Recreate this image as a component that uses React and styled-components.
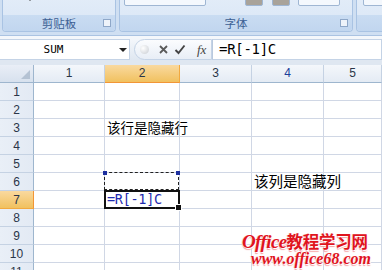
import React from "react";
import styled, { createGlobalStyle } from "styled-components";

const Global = createGlobalStyle`
  body {
    margin: 0;
    background: #ffffff;
    font-family: "Noto Sans CJK SC", "Noto Sans", sans-serif;
  }
`;

const COLS = [71, 75, 72, 72, 58];
const ROWS = 11;

const Page = styled.div`
  width: 382px;
  height: 270px;
  overflow: hidden;
  position: relative;
  background: #fff;
`;

const Ribbon = styled.div`
  height: 36px;
  display: flex;
  gap: 3px;
  padding: 0 0 0 2px;
  background: #cfdff2;
  border-bottom: 1px solid #aac3e2;
  box-sizing: border-box;
`;

const Group = styled.div`
  width: ${p => p.w}px;
  flex: none;
  height: 34px;
  margin-top: -2px;
  border: 1px solid #a9c3e3;
  border-top: none;
  border-radius: 0 0 4px 4px;
  background: linear-gradient(#e2ecf8, #d9e6f6);
  display: flex;
  flex-direction: column;
  box-sizing: border-box;
  overflow: hidden;
`;

const GroupBody = styled.div`
  flex: 1;
  position: relative;
`;

const GroupLabel = styled.div`
  height: 16px;
  background: linear-gradient(#c9dcf2, #c1d6ef);
  color: #3c5f94;
  font-size: 11.5px;
  line-height: 16px;
  text-align: center;
  position: relative;
`;

const Launcher = styled.span`
  position: absolute;
  right: ${p => p.r}px;
  top: 4px;
  width: 6px;
  height: 6px;
  border: 1px solid #8ea7c8;
  background: #eef3fa;
`;

const Stub = styled.div`
  position: absolute;
  left: ${p => p.x}px;
  top: -3px;
  width: ${p => p.w}px;
  height: 9px;
  border: 1px solid #9fb6d3;
  border-radius: 2px;
  background: ${p => p.fill || "#f4f8fd"};
`;

const Arrow = styled.span`
  position: absolute;
  left: 24px;
  top: 0px;
  width: 0;
  height: 0;
  border-left: 3px solid transparent;
  border-right: 3px solid transparent;
  border-top: 3px solid #4a4a4a;
`;

const FormulaRow = styled.div`
  height: 29px;
  padding-top: 3px;
  background: linear-gradient(#f4f7fb 0, #f4f7fb 3px, #dfe7f1 24px);
  display: flex;
  align-items: flex-start;
  box-sizing: border-box;
`;

const NameBox = styled.div`
  width: 130px;
  height: 21px;
  background: #fff;
  border: 1px solid #c4d3e6;
  border-left: none;
  box-sizing: border-box;
  display: flex;
  align-items: center;
  font-family: "DejaVu Sans Mono", monospace;
  font-size: 11px;
  color: #000;
  position: relative;
`;

const NameText = styled.span`
  flex: 1;
  text-align: center;
  padding-right: 12px;
`;

const DropArrow = styled.span`
  width: 0;
  height: 0;
  margin-right: 2px;
  border-left: 4px solid transparent;
  border-right: 4px solid transparent;
  border-top: 4px solid #222;
`;

const Buttons = styled.div`
  width: 78px;
  height: 21px;
  margin-left: 4px;
  border: 1px solid #c4d3e6;
  border-radius: 11px 0 0 11px;
  background: linear-gradient(#fbfcfe, #e8eef6);
  box-sizing: border-box;
  display: flex;
  align-items: center;
  gap: 5px;
  padding-left: 5px;
`;

const Circle = styled.span`
  width: 9px;
  height: 9px;
  border-radius: 50%;
  background: radial-gradient(circle at 35% 35%, #ffffff, #c8ccd2);
  margin-right: 4px;
`;

const Fx = styled.span`
  font-family: "Liberation Serif", serif;
  font-style: italic;
  font-size: 13px;
  color: #444;
  margin-left: 6px;
`;

const FormulaInput = styled.div`
  flex: 1;
  height: 21px;
  background: #fff;
  border: 1px solid #c4d3e6;
  border-left: 1px solid #b9c9de;
  box-sizing: border-box;
  font-family: "DejaVu Sans Mono", monospace;
  font-size: 14px;
  line-height: 19px;
  padding-left: 6px;
  color: #000;
  letter-spacing: -0.3px;
`;

const Sheet = styled.div`
  display: grid;
  grid-template-columns: 34px ${COLS.map(c => c + "px").join(" ")};
  grid-auto-rows: 18px;
`;

const Corner = styled.div`
  background: linear-gradient(#e9eef6, #d7e1ee);
  border-right: 1px solid #9eb6ce;
  border-bottom: 1px solid #9eb6ce;
  box-sizing: border-box;
  position: relative;
  &::after {
    content: "";
    position: absolute;
    right: 3px;
    bottom: 3px;
    border-left: 9px solid transparent;
    border-bottom: 9px solid #b4c2d3;
  }
`;

const ColHead = styled.div`
  background: ${p =>
    p.active
      ? "linear-gradient(#f9d99f, #f1c15f)"
      : "linear-gradient(#f4f7fb, #e4ebf4)"};
  border-right: 1px solid ${p => (p.active ? "#f2a93f" : "#c5d2e3")};
  border-bottom: 1px solid ${p => (p.active ? "#f29536" : "#9eb6ce")};
  box-sizing: border-box;
  text-align: center;
  font-family: "Liberation Sans", sans-serif;
  font-size: 12px;
  line-height: 17px;
  color: ${p => p.color || "#2a3548"};
`;

const RowHead = styled.div`
  background: ${p =>
    p.active
      ? "linear-gradient(#f9d99f, #f1c15f)"
      : "linear-gradient(90deg, #e9eff7, #e3eaf4)"};
  border-right: 1px solid ${p => (p.active ? "#f29536" : "#9eb6ce")};
  border-bottom: 1px solid ${p => (p.active ? "#f2a93f" : "#c5d2e3")};
  box-sizing: border-box;
  text-align: center;
  font-family: "Liberation Sans", sans-serif;
  font-size: 12px;
  line-height: 18px;
  color: #2a3548;
`;

const Cell = styled.div`
  border-right: 1px solid #d0d7e5;
  border-bottom: 1px solid #d0d7e5;
  box-sizing: border-box;
  position: relative;
  white-space: nowrap;
  z-index: ${p => (p.top ? 2 : 1)};
`;

const Spill = styled.span`
  position: absolute;
  left: 2px;
  top: -1px;
  font-family: "Noto Sans CJK SC", sans-serif;
  font-size: ${p => p.size || 14}px;
  line-height: 18px;
  color: #000;
`;

const Marquee = styled.div`
  position: absolute;
  left: -1px;
  top: -1px;
  right: 0;
  bottom: 0;
  border: 1px dashed #222;
  &::before,
  &::after {
    content: "";
    position: absolute;
    top: -2px;
    width: 4px;
    height: 4px;
    background: #1c2f9e;
  }
  &::before {
    left: -2px;
  }
  &::after {
    right: -2px;
  }
`;

const Active = styled.div`
  position: absolute;
  left: -1px;
  top: -1px;
  right: -1px;
  bottom: -1px;
  border: 2px solid #111;
  font-family: "DejaVu Sans Mono", monospace;
  font-size: 13.5px;
  line-height: 15px;
  color: #1f2bb0;
  padding-left: 1px;
  letter-spacing: -0.3px;
  &::after {
    content: "";
    position: absolute;
    right: -4px;
    bottom: -4px;
    width: 5px;
    height: 5px;
    background: #111;
    border: 1px solid #fff;
  }
`;

const Watermark = styled.div`
  position: absolute;
  left: 242px;
  top: 232px;
  color: #e0141e;
  text-shadow: 1px 1px 0 #fff, -1px 0 0 #fbd6d6, 0 2px 1px #f3a1a1;
  line-height: 1;
  z-index: 5;
`;

const WmTitle = styled.div`
  font-family: "Liberation Serif", "Noto Sans CJK SC", serif;
  font-style: italic;
  font-weight: bold;
  font-size: 19px;
  line-height: 19px;
  letter-spacing: -0.6px;
  span {
    font-family: "Noto Sans CJK SC", sans-serif;
    font-style: normal;
    font-size: 16.5px;
    letter-spacing: -0.3px;
  }
`;

const WmUrl = styled.div`
  font-family: "Liberation Serif", serif;
  font-style: italic;
  font-weight: bold;
  font-size: 16px;
  line-height: 16px;
  margin-left: 9px;
`;

const Icon = styled.svg`
  display: block;
`;

const XIcon = () => (
  <Icon width="11" height="11" viewBox="0 0 11 11">
    <path d="M2 2 L9 9 M9 2 L2 9" stroke="#5a5a5a" strokeWidth="1.8" />
  </Icon>
);

const CheckIcon = () => (
  <Icon width="12" height="11" viewBox="0 0 12 11">
    <path d="M1.5 6 L4.5 9 L10.5 1.5" stroke="#444" strokeWidth="1.9" fill="none" />
  </Icon>
);

const cellContent = (r, c) => {
  if (r === 3 && c === 2) return <Spill size={13.5}>该行是隐藏行</Spill>;
  if (r === 6 && c === 4) return <Spill size={14.5}>该列是隐藏列</Spill>;
  if (r === 6 && c === 2) return <Marquee />;
  if (r === 7 && c === 2) return <Active>=R[-1]C</Active>;
  return null;
};

export default function App() {
  const rows = [];
  for (let r = 1; r <= ROWS; r++) {
    rows.push(
      <RowHead key={"h" + r} active={r === 7}>
        {r}
      </RowHead>
    );
    for (let c = 1; c <= COLS.length; c++) {
      rows.push(
        <Cell key={r + "-" + c} top={(r === 7 || r === 6) && c === 2}>
          {cellContent(r, c)}
        </Cell>
      );
    }
  }

  return (
    <Page>
      <Global />
      <Ribbon>
        <Group w={114}>
          <GroupBody>
            <Arrow />
          </GroupBody>
          <GroupLabel>
            剪贴板
            <Launcher r={4} />
          </GroupLabel>
        </Group>
        <Group w={234}>
          <GroupBody>
            <Stub x={4} w={80} />
            <Stub x={125} w={16} fill="#a9a39a" />
            <Stub x={152} w={16} fill="#a9a39a" />
            <Stub x={178} w={40} />
          </GroupBody>
          <GroupLabel>
            字体
            <Launcher r={4} />
          </GroupLabel>
        </Group>
        <Group w={40}>
          <GroupBody>
            <Stub x={6} w={40} />
          </GroupBody>
          <GroupLabel />
        </Group>
      </Ribbon>
      <FormulaRow>
        <NameBox>
          <NameText>SUM</NameText>
          <DropArrow />
        </NameBox>
        <Buttons>
          <Circle />
          <XIcon />
          <CheckIcon />
          <Fx>fx</Fx>
        </Buttons>
        <FormulaInput>=R[-1]C</FormulaInput>
      </FormulaRow>
      <Sheet>
        <Corner />
        {COLS.map((w, i) => (
          <ColHead key={i} active={i === 1} color={i === 3 ? "#1c3f9a" : undefined}>
            {i + 1}
          </ColHead>
        ))}
        {rows}
      </Sheet>
      <Watermark>
        <WmTitle>
          Office<span>教程学习网</span>
        </WmTitle>
        <WmUrl>www.office68.com</WmUrl>
      </Watermark>
    </Page>
  );
}
